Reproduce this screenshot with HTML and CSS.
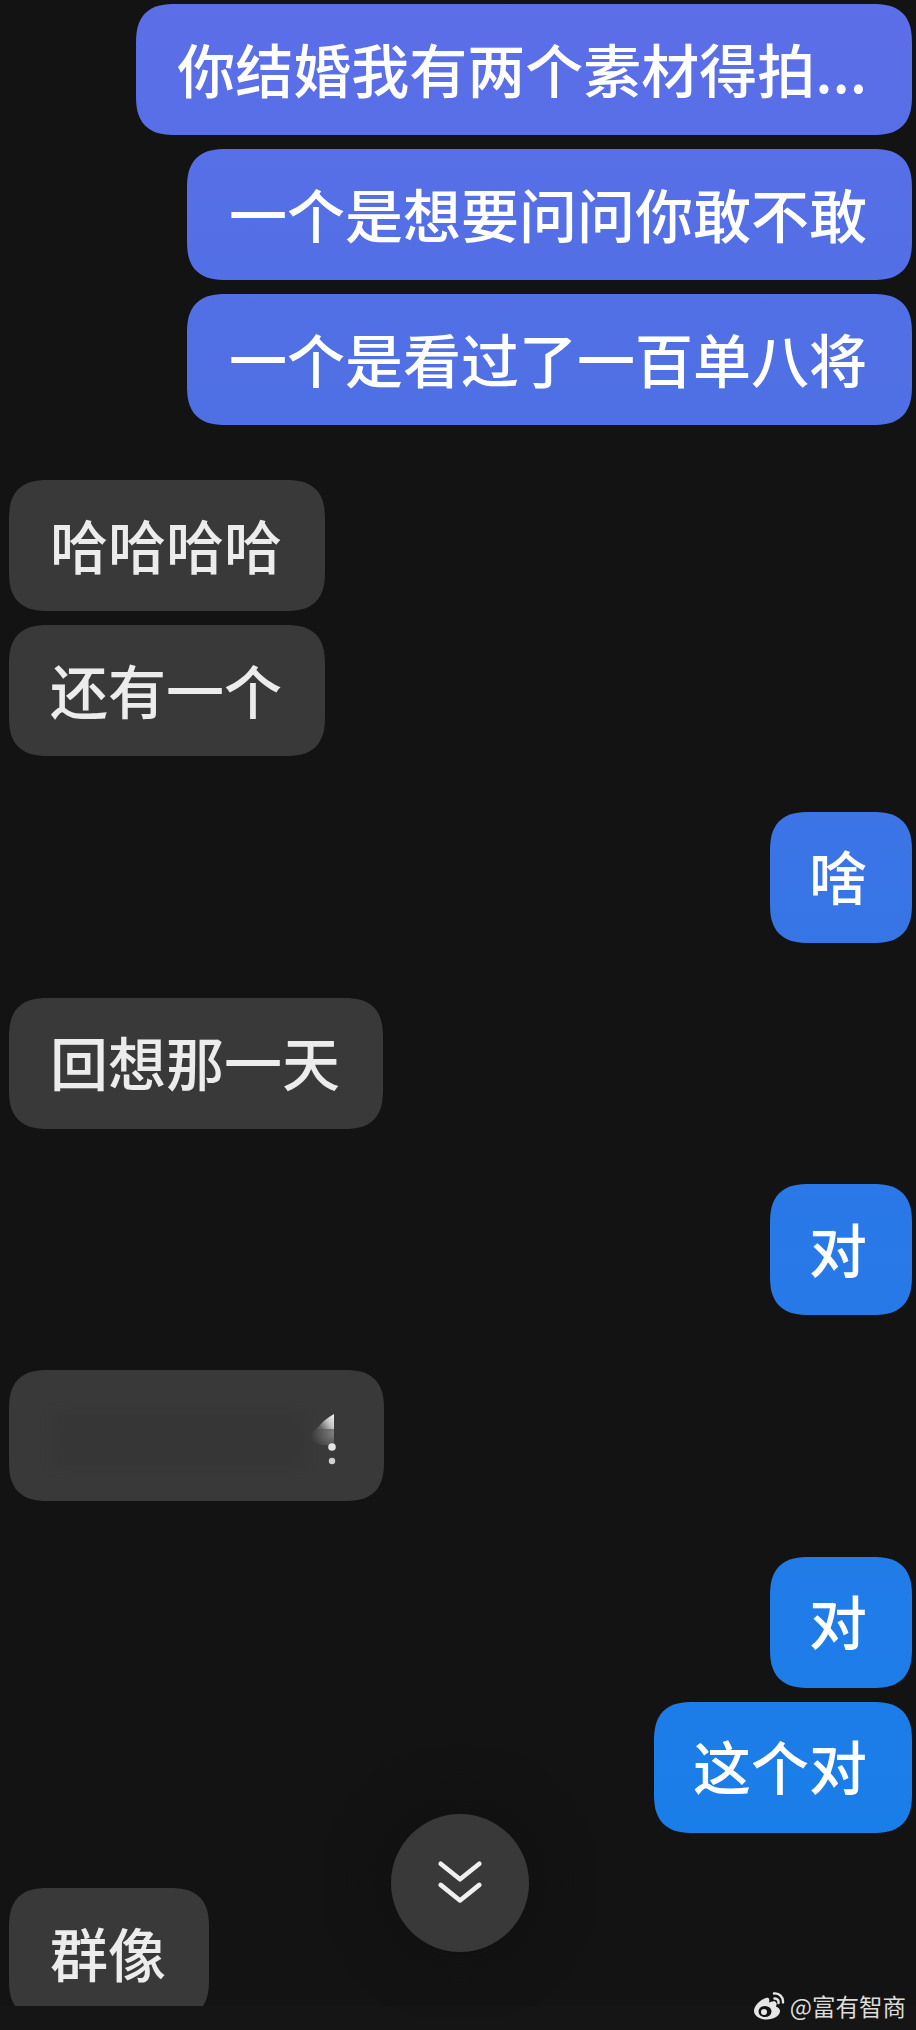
FILE: index.html
```html
<!DOCTYPE html>
<html lang="zh-CN">
<head>
<meta charset="utf-8">
<title>聊天</title>
<link rel="stylesheet" href="styles.css">
</head>
<body>
<main class="chat">
  <section class="group out">
    <div class="bubble long">你结婚我有两个素材得拍...</div>
    <div class="bubble long">一个是想要问问你敢不敢</div>
    <div class="bubble long">一个是看过了一百单八将</div>
  </section>
  <section class="group in">
    <div class="bubble">哈哈哈哈</div>
    <div class="bubble">还有一个</div>
  </section>
  <section class="group out">
    <div class="bubble">啥</div>
  </section>
  <section class="group in">
    <div class="bubble">回想那一天</div>
  </section>
  <section class="group out">
    <div class="bubble">对</div>
  </section>
  <section class="group in">
    <div class="bubble redacted">
      <span class="smudge"></span>
      <svg class="fragment" width="26" height="56" viewBox="0 0 26 56" aria-hidden="true">
        <defs>
          <linearGradient id="frag" x1="1" y1="0" x2="0" y2="0.6">
            <stop offset="0" stop-color="#f4f4f4"/>
            <stop offset="0.5" stop-color="#c0c0c0"/>
            <stop offset="1" stop-color="#606060"/>
          </linearGradient>
          <radialGradient id="glow" cx="1" cy="0.35" r="1">
            <stop offset="0" stop-color="#808080"/>
            <stop offset="1" stop-color="#3a3a3a"/>
          </radialGradient>
          <filter id="soft"><feGaussianBlur stdDeviation="0.700"/></filter>
        </defs>
        <path d="M24 12V30Q10 34 1 26Q0 16 10 12Z" fill="url(#glow)" filter="url(#soft)"/>
        <path d="M24 0V15H7Q13 6 24 0Z" fill="url(#frag)"/>
        <circle cx="22" cy="33" r="3.800" fill="#e4e4e4" filter="url(#soft)"/>
        <circle cx="22" cy="47" r="3.200" fill="#d0d0d0" filter="url(#soft)"/>
      </svg>
    </div>
  </section>
  <section class="group out">
    <div class="bubble">对</div>
    <div class="bubble">这个对</div>
  </section>
  <section class="group in">
    <div class="bubble">群像</div>
  </section>
</main>
<button class="scroll-down" aria-label="滚动到底部">
  <svg width="46" height="48" viewBox="0 0 50 52" fill="none" stroke="#f0f0f0" stroke-width="5" stroke-linecap="round" stroke-linejoin="round">
    <path d="M4 5 25 22 46 5"/>
    <path d="M4 28 25 45 46 28"/>
  </svg>
</button>
<div class="watermark">
  <svg width="33" height="28" viewBox="0 0 33 28" aria-hidden="true">
    <path d="M13 6C7 8 1 14 1 19c0 5 6 8.500 12.500 8.500C21 27.500 27 23.500 27 19c0-2.500-2-3.800-4-4.300 1-2.500.7-4.300-.6-5-1.800-1-5 .2-6.400 1 .6-2.500.4-4-.5-4.700-.6-.4-1.500-.4-2.500 0Z" fill="#e6e6e6"/>
    <ellipse cx="12" cy="19.500" rx="6.500" ry="5.500" fill="#141414"/>
    <circle cx="11" cy="20" r="3" fill="#e6e6e6"/>
    <path d="M21 1.500c5-.8 9.500 3.500 9 9M21.500 6.500c2.500-.3 4.500 1.800 4 4.500" fill="none" stroke="#e6e6e6" stroke-width="2.400" stroke-linecap="round"/>
  </svg>
  <span>@富有智商</span>
</div>
</body>
</html>
```

FILE: styles.css
```css
* {
  box-sizing: border-box;
}

html,
body {
  margin: 0;
  height: 2030px;
  background: #151515;
  overflow: hidden;
}

body {
  position: relative;
  font-family: "Noto Sans CJK SC", "Noto Sans", sans-serif;
}

.chat {
  height: 2006px;
  overflow: hidden;
  padding: 4px 4px 0 9px;
  display: flex;
  flex-direction: column;
  gap: 55.300px;
  background: #131313;
}

.group {
  display: flex;
  flex-direction: column;
  gap: 14px;
  flex: none;
}

.group.out {
  align-items: flex-end;
}

.group.in {
  align-items: flex-start;
}

.bubble {
  height: 131px;
  border-radius: 34px;
  display: flex;
  align-items: center;
  flex: none;
  font-size: 58px;
  font-weight: 500;
  line-height: 1;
  white-space: nowrap;
}

@supports (corner-shape: squircle) {
  .bubble {
    border-radius: 40px;
    corner-shape: superellipse(1.4);
  }
}

.out .bubble {
  padding: 0 45px 4px 39px;
  color: #fff;
  background: linear-gradient(180deg, #5c6ee8 0, #4f70e4 400px, #2a78e8 1200px, #1a7ee8 1830px) fixed;
}

.out .bubble.long {
  padding-left: 41.500px;
}

.in .bubble {
  padding: 0 43px 4px 41px;
  color: #ececec;
  background: #393939;
}

.redacted {
  position: relative;
  width: 375px;
}

.smudge {
  position: absolute;
  left: 45px;
  top: 45px;
  width: 250px;
  height: 50px;
  background: #363636;
  filter: blur(6px);
}

.fragment {
  position: absolute;
  left: 301px;
  top: 44px;
}

.scroll-down {
  position: absolute;
  left: 391px;
  top: 1814px;
  width: 138px;
  height: 138px;
  padding: 0;
  border: 0;
  border-radius: 50%;
  background: #393939;
  box-shadow: 0 0 40px 22px #121212;
  display: flex;
  align-items: center;
  justify-content: center;
}

.watermark {
  position: absolute;
  right: 10px;
  top: 1989px;
  display: flex;
  align-items: center;
  gap: 4px;
  color: #dcdcdc;
  font-size: 23.500px;
  line-height: 34px;
}

.watermark span {
  white-space: nowrap;
}
```
